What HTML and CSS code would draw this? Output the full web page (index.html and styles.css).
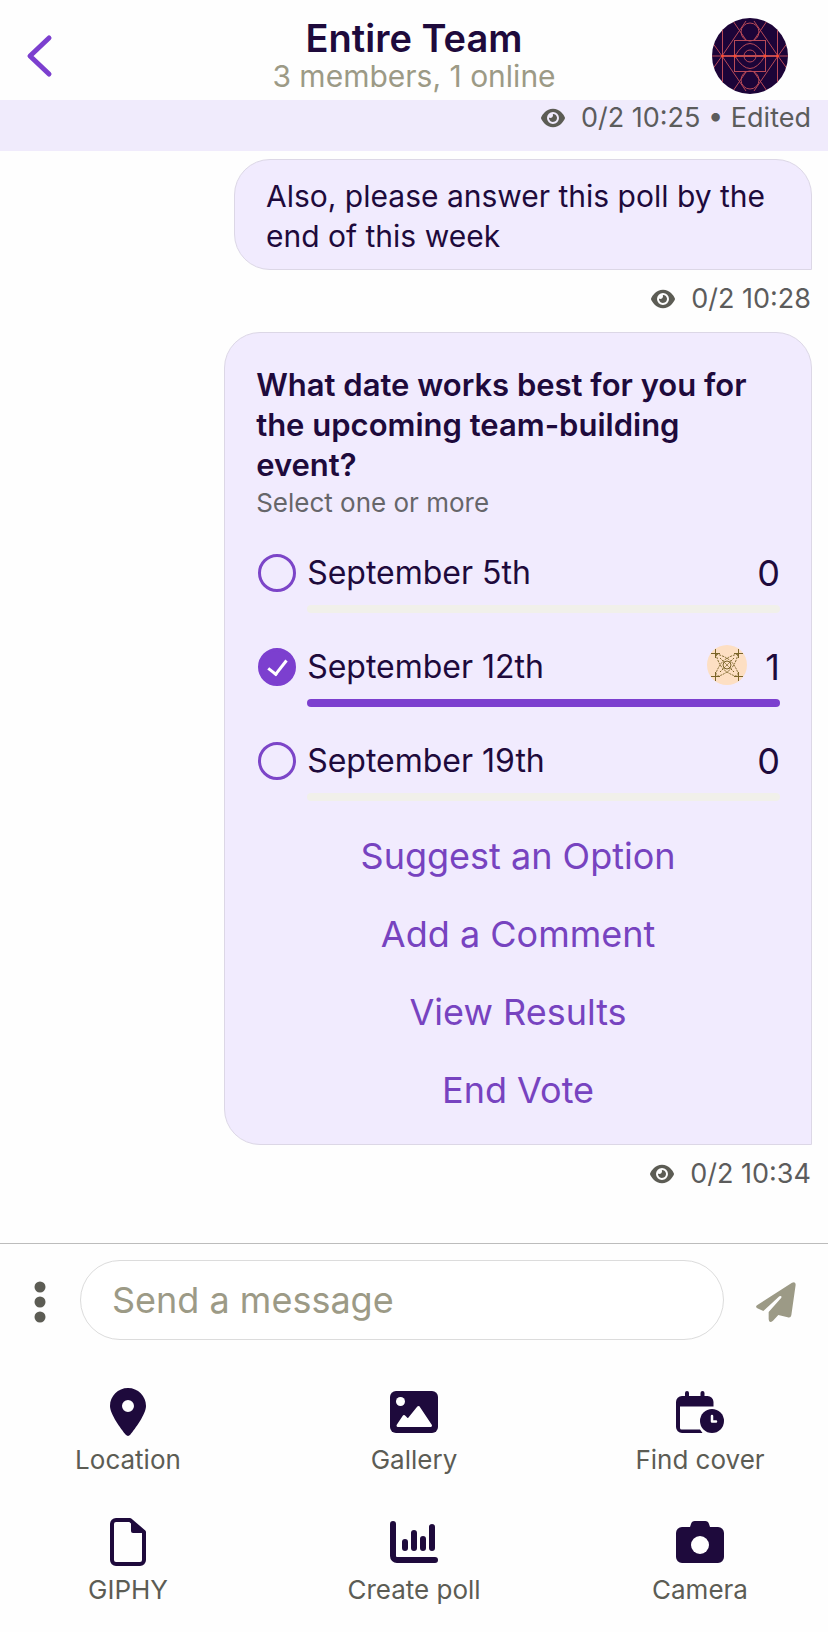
FILE: index.html
```html
<!DOCTYPE html>
<html lang="en">
<head>
    <meta charset="utf-8">
    <meta name="viewport" content="width=device-width, initial-scale=1">
    <title>Entire Team</title>
    <link rel="stylesheet" href="styles.css">
</head>
<body>
    <!-- shared icons -->
    <svg class="sprite" aria-hidden="true">
        <symbol id="icon-eye" viewBox="0 0 576 512">
            <path d="M288 32c-80.8 0-145.5 36.8-192.6 80.6C48.6 156 17.3 208 2.5 243.7c-3.3 7.9-3.3 16.7 0 24.6C17.3 304 48.6 356 95.4 399.4C142.5 443.2 207.2 480 288 480s145.5-36.8 192.6-80.6c46.8-43.5 78.1-95.4 93-131.1c3.3-7.9 3.3-16.7 0-24.6c-14.9-35.7-46.2-87.7-93-131.1C433.5 68.8 368.8 32 288 32zM144 256a144 144 0 1 1 288 0 144 144 0 1 1 -288 0zm144-64c0 35.3-28.7 64-64 64c-7.1 0-13.9-1.2-20.3-3.3c-5.5-1.8-11.9 1.6-11.7 7.4c.3 6.9 1.3 13.8 3.2 20.7c13.7 51.2 66.4 81.6 117.6 67.9s81.6-66.4 67.9-117.6c-11.1-41.5-47.8-69.4-88.6-71.1c-5.8-.2-9.2 6.1-7.4 11.7c2.1 6.4 3.3 13.2 3.3 20.3z"/>
        </symbol>
    </svg>

    <header class="chat-header">
        <button type="button" class="back-btn" aria-label="Back">
            <svg width="30" height="44" viewBox="0 0 30 44">
                <path d="M25 4L6 22l19 18" fill="none" stroke="#7c3fcf" stroke-width="5" stroke-linecap="round" stroke-linejoin="round"/>
            </svg>
        </button>
        <div class="chat-title">
            <h1>Entire Team</h1>
            <p>3 members, 1 online</p>
        </div>
        <svg class="team-avatar" viewBox="0 0 76 76" role="img" aria-label="Team avatar">
            <clipPath id="avatarClip"><circle cx="38" cy="38" r="38"/></clipPath>
            <g clip-path="url(#avatarClip)">
                <rect width="76" height="76" fill="#1c0438"/>
                <g fill="none" stroke="#b84a58" stroke-width="1">
                    <path d="M10.500 0v76M65.500 0v76"/>
                    <rect x="22.500" y="22.500" width="31" height="31"/>
                    <path d="M10 38L34 3M10 38l24 35M66 38L42 3M66 38L42 73"/>
                    <path d="M21 3l13 19M55 3L42 22M21 73l13-19M55 73L42 54"/>
                    <path d="M0 24l10 14L0 52M76 24L66 38l10 14"/>
                    <path d="M23 38Q38 13 53 38Q38 63 23 38z"/>
                    <ellipse cx="38" cy="14" rx="9" ry="9"/>
                    <ellipse cx="38" cy="62" rx="9" ry="9"/>
                    <circle cx="38" cy="38" r="6"/>
                </g>
                <path d="M0 38h76" stroke="#b84a58" stroke-width="1"/>
                <path d="M10 38h56" stroke="#c04a50" stroke-width="2"/>
                <g fill="#ff4a2e">
                    <circle cx="10.500" cy="38" r="1.500"/>
                    <circle cx="23" cy="38" r="1.500"/>
                    <circle cx="53" cy="38" r="1.500"/>
                    <circle cx="65.500" cy="38" r="1.500"/>
                </g>
            </g>
        </svg>
    </header>

    <main class="messages">
        <div class="meta meta-band">
            <svg class="eye"><use href="#icon-eye"/></svg>
            <span>0/2 10:25 • Edited</span>
        </div>

        <div class="bubble bubble-text">Also, please answer this poll by the end of this week</div>
        <div class="meta">
            <svg class="eye"><use href="#icon-eye"/></svg>
            <span>0/2 10:28</span>
        </div>

        <section class="bubble poll">
            <h2>What date works best for you for the upcoming team-building event?</h2>
            <p class="poll-hint">Select one or more</p>
            <ul class="poll-options">
                <li>
                    <input type="checkbox" id="opt5">
                    <label for="opt5">September 5th</label>
                    <span class="count">0</span>
                    <div class="track"><div class="fill" style="width: 0%"></div></div>
                </li>
                <li>
                    <input type="checkbox" id="opt12" checked>
                    <label for="opt12">September 12th</label>
                    <svg class="voter" viewBox="0 0 40 40" role="img" aria-label="Voter">
                        <circle cx="20" cy="20" r="20" fill="#fddfc3"/>
                        <g fill="none" stroke="#7a6428" stroke-width="1">
                            <path d="M4 8.500h9M8.500 4v9M27 8.500h9M31.500 4v9M4 31.500h9M8.500 27v9M27 31.500h9M31.500 27v9"/>
                            <path stroke-dasharray="2 1" d="M9 9Q22 12 27 20T31 31M31 9Q18 12 13 20T9 31M9 9Q12 22 20 27T31 31M31 9Q28 22 20 27T9 31"/>
                            <path stroke-dasharray="2 1" d="M13 13l14 14M27 13L13 27"/>
                            <circle cx="20" cy="20" r="4"/>
                        </g>
                    </svg>
                    <span class="count">1</span>
                    <div class="track"><div class="fill" style="width: 100%"></div></div>
                </li>
                <li>
                    <input type="checkbox" id="opt19">
                    <label for="opt19">September 19th</label>
                    <span class="count">0</span>
                    <div class="track"><div class="fill" style="width: 0%"></div></div>
                </li>
            </ul>
            <div class="poll-actions">
                <button type="button">Suggest an Option</button>
                <button type="button">Add a Comment</button>
                <button type="button">View Results</button>
                <button type="button">End Vote</button>
            </div>
        </section>
        <div class="meta">
            <svg class="eye"><use href="#icon-eye"/></svg>
            <span>0/2 10:34</span>
        </div>
    </main>

    <footer>
        <form class="composer">
            <button type="button" class="more-btn" aria-label="More">
                <svg width="12" height="42" viewBox="0 0 12 42" fill="#5c5c54">
                    <circle cx="6" cy="6" r="5.500"/>
                    <circle cx="6" cy="21" r="5.500"/>
                    <circle cx="6" cy="36" r="5.500"/>
                </svg>
            </button>
            <input type="text" placeholder="Send a message" aria-label="Message">
            <button type="submit" class="send-btn" aria-label="Send">
                <svg width="40" height="40" viewBox="0 0 120 120" fill="#9c9a86">
                    <path d="M3 70L108 2q11-5 11 6l-13 92q-2 9-11 6l-28-7-16 17q-12 9-13-4V90l38-43q2-8-6-4L22 87 4 79q-7-5-1-9z"/>
                </svg>
            </button>
        </form>

        <nav class="attachments">
            <button type="button">
                <svg viewBox="0 0 384 512"><path d="M215.7 499.2C267 435 384 279.4 384 192C384 86 298 0 192 0S0 86 0 192c0 87.4 117 243 168.300 307.200c12.300 15.300 35.100 15.300 47.400 0zM192 128a64 64 0 1 1 0 128 64 64 0 1 1 0-128z"/></svg>
                Location
            </button>
            <button type="button">
                <svg viewBox="0 0 48 48">
                    <rect y="3" width="48" height="42" rx="6"/>
                    <circle cx="10.500" cy="13.500" r="4.500" fill="#fff"/>
                    <path d="M8 37.500L14 28.500l4 4L28.500 19.500 40.500 37.500z" fill="#fff" stroke="#fff" stroke-width="3" stroke-linejoin="round"/>
                </svg>
                Gallery
            </button>
            <button type="button">
                <svg viewBox="0 0 48 48">
                    <path d="M11 5v6M26.500 5v6" fill="none" stroke="#1e0a3c" stroke-width="4" stroke-linecap="round"/>
                    <path d="M6 8h25.500a6 6 0 0 1 6 6v4.500H4V40a1.500 1.500 0 0 0 1.500 1.500h18.500l2.500 3.500H6a6 6 0 0 1-6-6V14a6 6 0 0 1 6-6z"/>
                    <circle cx="36" cy="33" r="12"/>
                    <path d="M36 28v5.500h4" fill="none" stroke="#fff" stroke-width="2.500" stroke-linecap="round" stroke-linejoin="round"/>
                </svg>
                Find cover
            </button>
            <button type="button">
                <svg viewBox="0 0 48 48">
                    <path d="M12 2h14l14 12v28a4 4 0 0 1-4 4H12a4 4 0 0 1-4-4V6a4 4 0 0 1 4-4z" fill="none" stroke="#1e0a3c" stroke-width="4" stroke-linejoin="round"/>
                    <path d="M27 2l14 13H29a2 2 0 0 1-2-2z"/>
                </svg>
                GIPHY
            </button>
            <button type="button">
                <svg viewBox="0 0 48 48">
                    <g fill="none" stroke="#1e0a3c" stroke-width="6" stroke-linecap="round">
                        <path d="M3 6v32a4 4 0 0 0 4 4h38"/>
                        <path d="M15 24v6M24 15v15M33 21v9M42 9v21"/>
                    </g>
                </svg>
                Create poll
            </button>
            <button type="button">
                <svg viewBox="0 0 48 48">
                    <path d="M14 9l1-3a4 4 0 0 1 4-3h10a4 4 0 0 1 4 3l1 3h8a6 6 0 0 1 6 6v24a6 6 0 0 1-6 6H6a6 6 0 0 1-6-6V15a6 6 0 0 1 6-6z"/>
                    <circle cx="24" cy="27" r="9" fill="#fff"/>
                </svg>
                Camera
            </button>
        </nav>
    </footer>
</body>
</html>
```
FILE: styles.css
```css
* {
    box-sizing: border-box;
}
body {
    margin: 0;
    min-height: 100vh;
    display: flex;
    flex-direction: column;
    background-color: #fefefe;
    color: #1e0a3c;
    font-family: Inter, "Open Sans", sans-serif;
}
h1, h2, p, ul {
    margin: 0;
    padding: 0;
}
button {
    padding: 0;
    border: none;
    background: none;
    font-family: inherit;
    cursor: pointer;
}
svg {
    display: block;
}
.sprite {
    position: absolute;
    width: 0;
    height: 0;
}

/* header */
.chat-header {
    display: grid;
    grid-template-columns: 1fr auto 1fr;
    align-items: center;
    padding: 16px 24px 4px;
}
.back-btn {
    justify-self: start;
}
.chat-title {
    padding-bottom: 4px;
    text-align: center;
}
.chat-title h1 {
    font-size: 38px;
    line-height: 44px;
    font-weight: 600;
}
.chat-title p {
    font-size: 30px;
    line-height: 32px;
    color: #9c9a86;
}
.team-avatar {
    width: 76px;
    height: 76px;
    justify-self: end;
    margin-right: 16px;
}

/* messages */
.messages {
    flex: 1;
    display: flex;
    flex-direction: column;
    align-items: flex-end;
}
.meta {
    display: flex;
    align-items: center;
    gap: 16px;
    margin: 13px 0 17px;
    padding: 0 17px;
    font-size: 27px;
    line-height: 32px;
    color: #5c5c5c;
}
.meta-band {
    align-self: stretch;
    justify-content: flex-end;
    margin: 0 0 8px;
    padding-top: 2px;
    padding-bottom: 17px;
    background-color: #f0ebfc;
}
.eye {
    width: 24px;
    height: 22px;
    fill: #5c5c54;
}
.bubble {
    margin-right: 16px;
    background-color: #f1ebfe;
    border: 1px solid #dcd7e6;
    border-radius: 36px 36px 0 36px;
}
.bubble-text {
    max-width: 578px;
    padding: 16px 32px 13px 31px;
    font-size: 30px;
    line-height: 40px;
}

/* poll */
.poll {
    width: 71%;
    padding: 32px 31px 15px;
}
.poll h2 {
    font-size: 31px;
    line-height: 40px;
    font-weight: 600;
}
.poll-hint {
    font-size: 26px;
    line-height: 36px;
    color: #66666a;
}
.poll-options {
    display: grid;
    gap: 26px;
    margin-top: 24px;
    list-style: none;
}
.poll-options li {
    display: flex;
    flex-wrap: wrap;
    align-items: center;
    row-gap: 4px;
}
.poll-options input {
    appearance: none;
    display: grid;
    place-items: center;
    width: 38px;
    height: 38px;
    margin: 0 11px 0 2px;
    border: 3px solid #7c45c8;
    border-radius: 50%;
}
.poll-options input:checked {
    background-color: #7c3fcf;
    border-color: #7c3fcf;
}
.poll-options input:checked::after {
    content: "";
    width: 8px;
    height: 16px;
    margin-bottom: 4px;
    border: solid #fff;
    border-width: 0 3px 3px 0;
    transform: rotate(38deg);
}
.poll-options label {
    flex: 1;
    font-size: 32px;
    line-height: 56px;
}
.voter {
    width: 40px;
    height: 40px;
    margin: 0 18px 4px 0;
}
.count {
    font-size: 36px;
    line-height: 56px;
}
.track {
    flex-basis: 100%;
    height: 8px;
    margin-left: 51px;
    border-radius: 4px;
    background-color: #f1f0ea;
}
.fill {
    height: 8px;
    border-radius: 4px;
    background-color: #7c3fcf;
}
.poll-actions {
    display: grid;
    margin-top: 16px;
}
.poll-actions button {
    font-size: 36px;
    line-height: 78px;
    color: #7743c0;
}

/* composer */
.composer {
    display: flex;
    align-items: center;
    padding: 16px 32px 0;
    border-top: 1px solid #bcbcbc;
}
.more-btn {
    margin: 4px 34px 0 2px;
}
.composer input {
    flex: 1;
    min-width: 0;
    height: 80px;
    padding: 0 31px;
    border: 1px solid #dcdcdc;
    border-radius: 40px;
    background-color: #fff;
    color: #1e0a3c;
    font-family: inherit;
    font-size: 36px;
}
.composer input::placeholder {
    color: #9c9a86;
    opacity: 1;
}
.send-btn {
    margin: 4px 0 0 32px;
}

/* attachments */
.attachments {
    display: grid;
    grid-template-columns: repeat(3, 1fr);
    gap: 42px 46px;
    padding: 48px 8px 26px;
}
.attachments button {
    display: flex;
    flex-direction: column;
    align-items: center;
    gap: 8px;
    font-size: 26px;
    line-height: 32px;
    color: #5c5c54;
}
.attachments svg {
    width: 48px;
    height: 48px;
    fill: #1e0a3c;
}
```
